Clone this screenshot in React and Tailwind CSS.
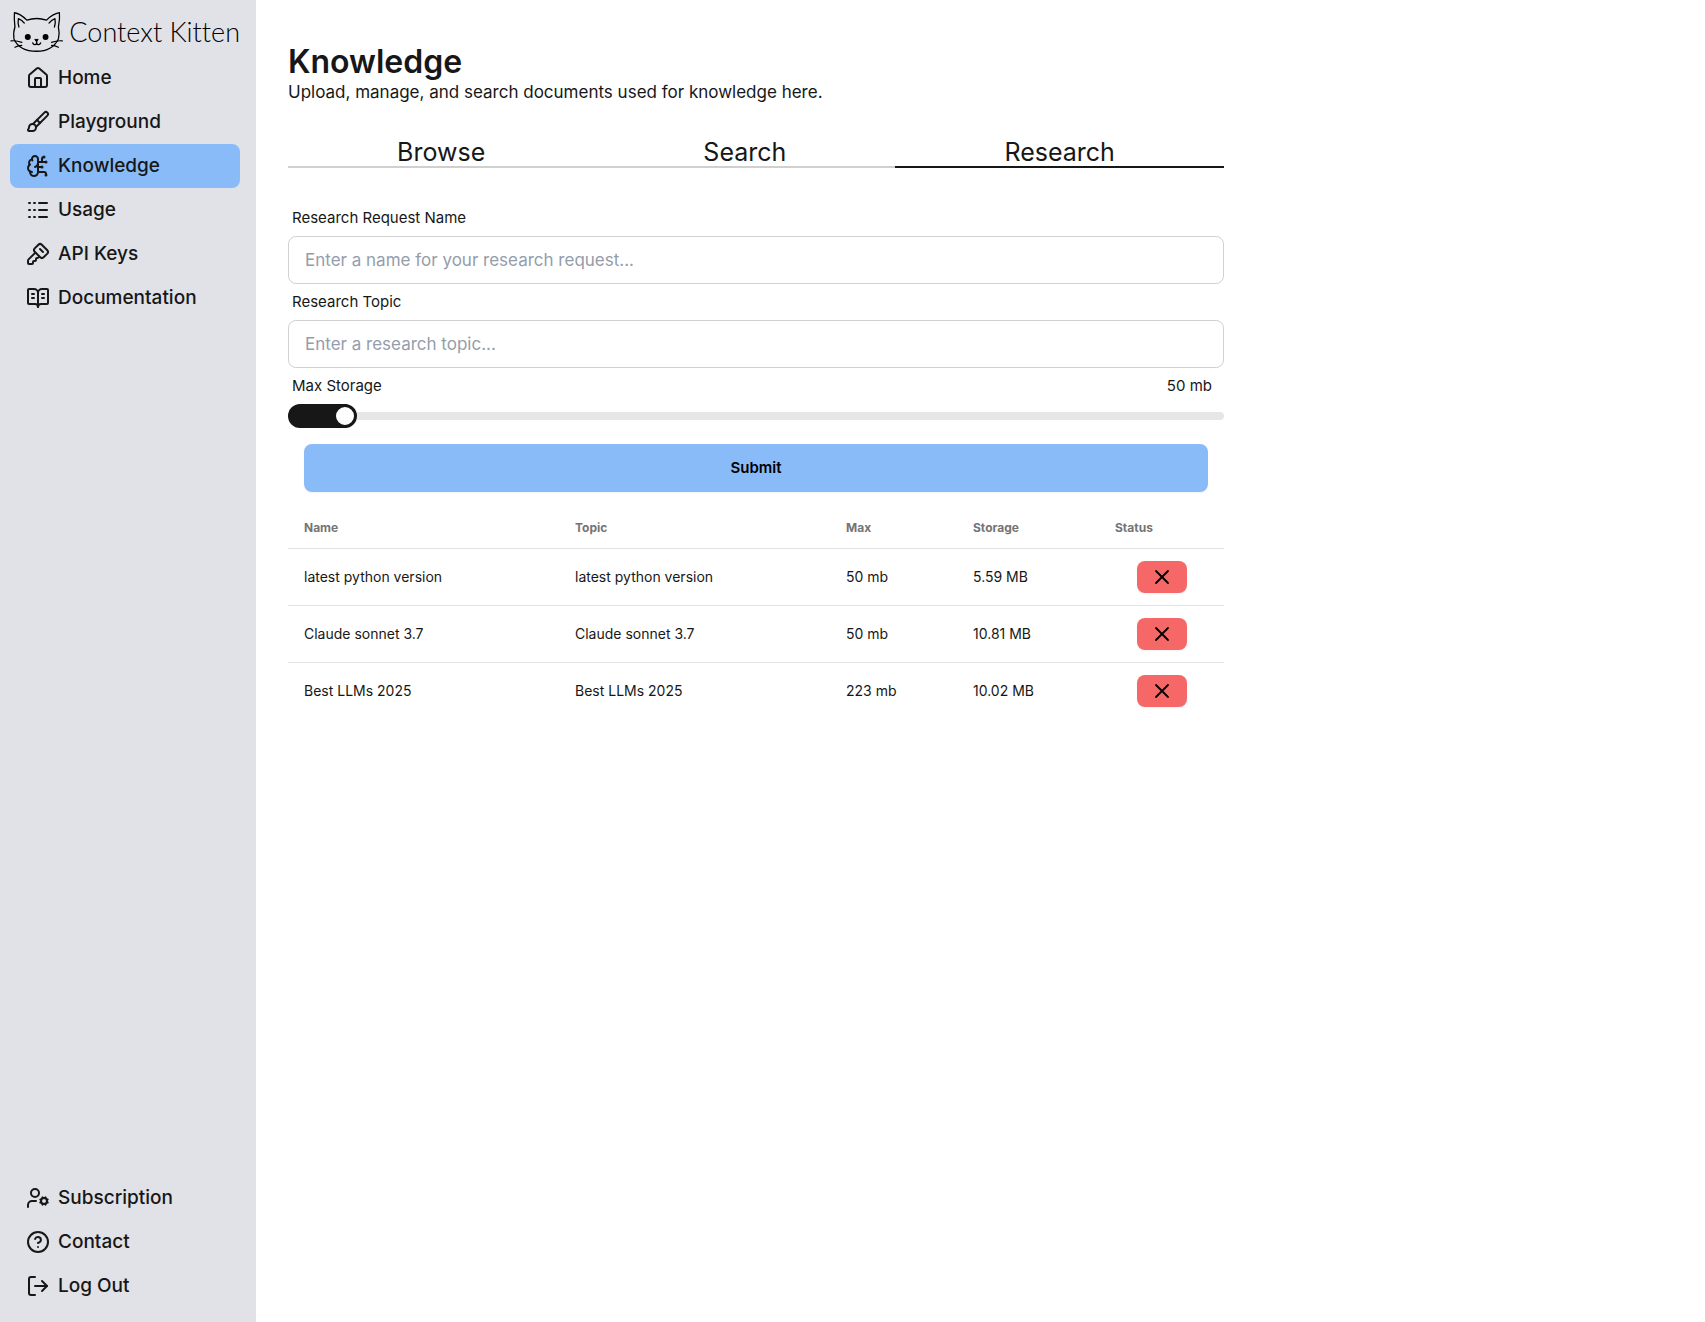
import { useState } from "react";
import {
  BookOpenText,
  BrainCircuit,
  Brush,
  CircleHelp,
  House,
  KeySquare,
  LogOut,
  Logs,
  UserCog,
  X,
} from "lucide-react";

const mainLinks = [
  { name: "Home", icon: House },
  { name: "Playground", icon: Brush },
  { name: "Knowledge", icon: BrainCircuit, active: true },
  { name: "Usage", icon: Logs },
  { name: "API Keys", icon: KeySquare },
  { name: "Documentation", icon: BookOpenText },
];

const accountLinks = [
  { name: "Subscription", icon: UserCog },
  { name: "Contact", icon: CircleHelp },
  { name: "Log Out", icon: LogOut },
];

const tabs = ["Browse", "Search", "Research"];

const requests = [
  { id: 1, name: "latest python version", topic: "latest python version", max: "50 mb", storage: "5.59 MB" },
  { id: 2, name: "Claude sonnet 3.7", topic: "Claude sonnet 3.7", max: "50 mb", storage: "10.81 MB" },
  { id: 3, name: "Best LLMs 2025", topic: "Best LLMs 2025", max: "223 mb", storage: "10.02 MB" },
];

const KittenLogo = () => (
  <svg width="54" height="42" viewBox="0 0 54 42" fill="none" stroke="black" strokeLinecap="round" strokeLinejoin="round" aria-hidden="true">
    <path strokeWidth="1.3" d="M17 9C13 5 9 2 4.500 1.500C4 7 4.500 12 5 16C3.500 20 3.500 24 4 28C8 37 17 40.500 27 40.500C37 40.500 45 36 49 28C50 24 50 20 49 16C50 11 50.500 6 50 1.500C45 2.500 41 5 37 9C31 7 23 7 17 9Z" />
    <path strokeWidth="1.3" d="M9 16C8 13 8 10 8.500 7.500C11 8.500 13 10 14.500 12M45 16C46 13 46 10 45.500 7.500C43 8.500 41 10 39.500 12" />
    <path strokeWidth="1.2" d="M1 30C5 29.500 8 30 12 31.500M5 36.500C7.500 35 9.500 34.500 12 34.500M53 30C49 29.500 46 30 42 31.500M49 36.500C46.500 35 44.500 34.500 42 34.500" />
    <path strokeWidth="1.4" d="M27 30V33M23 32C23.500 34 26 34.500 27 32.500C28 34.500 30.500 34 31 32" />
    <circle cx="18" cy="26" r="3" fill="black" stroke="none" />
    <circle cx="36" cy="26" r="3" fill="black" stroke="none" />
    <path fill="black" strokeWidth="1" d="M25.500 28.500H28.500L27 30.500Z" />
  </svg>
);

const NavList = ({ links }) => (
  <ul>
    {links.map(({ name, icon: Icon, active }) => (
      <li key={name}>
        <a
          href="#"
          aria-current={active ? "page" : undefined}
          className={`flex items-center gap-2 h-11 px-4 rounded-lg text-[19px] font-medium ${active ? "bg-[#89bbf9]" : "hover:bg-black/5"}`}
        >
          <Icon size={24} />
          {name}
        </a>
      </li>
    ))}
  </ul>
);

const App = () => {
  const [name, setName] = useState("");
  const [topic, setTopic] = useState("");
  const [maxStorage, setMaxStorage] = useState(50);

  return (
    <div className="flex min-h-screen bg-white text-[#171717] font-['Inter',sans-serif]">
      <aside className="flex flex-col justify-between w-64 shrink-0 bg-[#e1e2e7] pl-2.5 pr-4 pt-2.5 pb-3.5">
        <div>
          <a href="#" className="flex items-center gap-1.5 h-11 mb-0.5 text-black">
            <KittenLogo />
            <span className="text-[27px] leading-8 font-light whitespace-nowrap [font-variant-ligatures:none] font-['Lato',sans-serif]">Context Kitten</span>
          </a>
          <NavList links={mainLinks} />
        </div>
        <NavList links={accountLinks} />
      </aside>

      <main className="flex-1 max-w-[1000px] px-8 pt-11">
        <h1 className="text-[32px] leading-9 font-semibold">Knowledge</h1>
        <p className="text-[17px] leading-6">Upload, manage, and search documents used for knowledge here.</p>

        <div role="tablist" className="flex mt-[34px]">
          {tabs.map((tab) => (
            <button
              key={tab}
              role="tab"
              aria-selected={tab === "Research"}
              className={`flex-auto border-b-2 text-[25px] leading-7 ${tab === "Research" ? "border-[#171717]" : "border-[#d0d0d0]"}`}
            >
              {tab}
            </button>
          ))}
        </div>

        <form className="mt-8" onSubmit={(e) => e.preventDefault()}>
          <label htmlFor="name" className="block px-1 py-2 text-[15px] leading-5">Research Request Name</label>
          <input
            id="name"
            value={name}
            onChange={(e) => setName(e.target.value)}
            placeholder="Enter a name for your research request..."
            className="block w-full h-12 px-4 border border-[#d1d1d1] rounded-lg text-[17px] placeholder:text-[#949dab]"
          />
          <label htmlFor="topic" className="block px-1 py-2 text-[15px] leading-5">Research Topic</label>
          <input
            id="topic"
            value={topic}
            onChange={(e) => setTopic(e.target.value)}
            placeholder="Enter a research topic..."
            className="block w-full h-12 px-4 border border-[#d1d1d1] rounded-lg text-[17px] placeholder:text-[#949dab]"
          />
          <div className="flex justify-between pl-1 pr-3 py-2 text-[15px] leading-5">
            <label htmlFor="storage">Max Storage</label>
            <span>{maxStorage} mb</span>
          </div>
          <input
            id="storage"
            type="range"
            min="1"
            max="1000"
            value={maxStorage}
            onChange={(e) => setMaxStorage(e.target.value)}
            className="block w-full h-6 appearance-none overflow-hidden rounded-full bg-transparent [&::-webkit-slider-runnable-track]:h-2 [&::-webkit-slider-runnable-track]:rounded-full [&::-webkit-slider-runnable-track]:bg-[#e6e6e6] [&::-webkit-slider-thumb]:appearance-none [&::-webkit-slider-thumb]:-mt-2 [&::-webkit-slider-thumb]:size-6 [&::-webkit-slider-thumb]:rounded-full [&::-webkit-slider-thumb]:border-3 [&::-webkit-slider-thumb]:border-[#171717] [&::-webkit-slider-thumb]:bg-white [&::-webkit-slider-thumb]:shadow-[-1010px_0_0_1000px_#171717]"
          />
          <div className="px-4 py-4">
            <button type="submit" className="w-full h-12 rounded-lg bg-[#89bbf9] text-[15px] font-semibold text-black shadow-xs">Submit</button>
          </div>
        </form>

        <table className="w-full table-fixed text-left text-sm">
          <thead>
            <tr className="border-b border-[#e2e2e2] text-xs text-[#747474]">
              <th className="px-4 py-3 font-bold">Name</th>
              <th className="px-4 py-3 font-bold">Topic</th>
              <th className="w-[127px] px-4 py-3 font-bold">Max</th>
              <th className="w-[142px] px-4 py-3 font-bold">Storage</th>
              <th className="w-[125px] px-4 py-3 font-bold">Status</th>
            </tr>
          </thead>
          <tbody>
            {requests.map((request) => (
              <tr key={request.id} className="border-b border-[#e2e2e2] last:border-b-0">
                <td className="px-4 py-3">{request.name}</td>
                <td className="px-4 py-3">{request.topic}</td>
                <td className="px-4 py-3">{request.max}</td>
                <td className="px-4 py-3">{request.storage}</td>
                <td className="px-4 py-3">
                  <button aria-label="Remove request" className="flex items-center justify-center w-[50px] h-8 mx-auto rounded-lg bg-[#f66868] text-black shadow-xs">
                    <X size={24} strokeWidth={1.8} />
                  </button>
                </td>
              </tr>
            ))}
          </tbody>
        </table>
      </main>
    </div>
  );
};

export default App;
